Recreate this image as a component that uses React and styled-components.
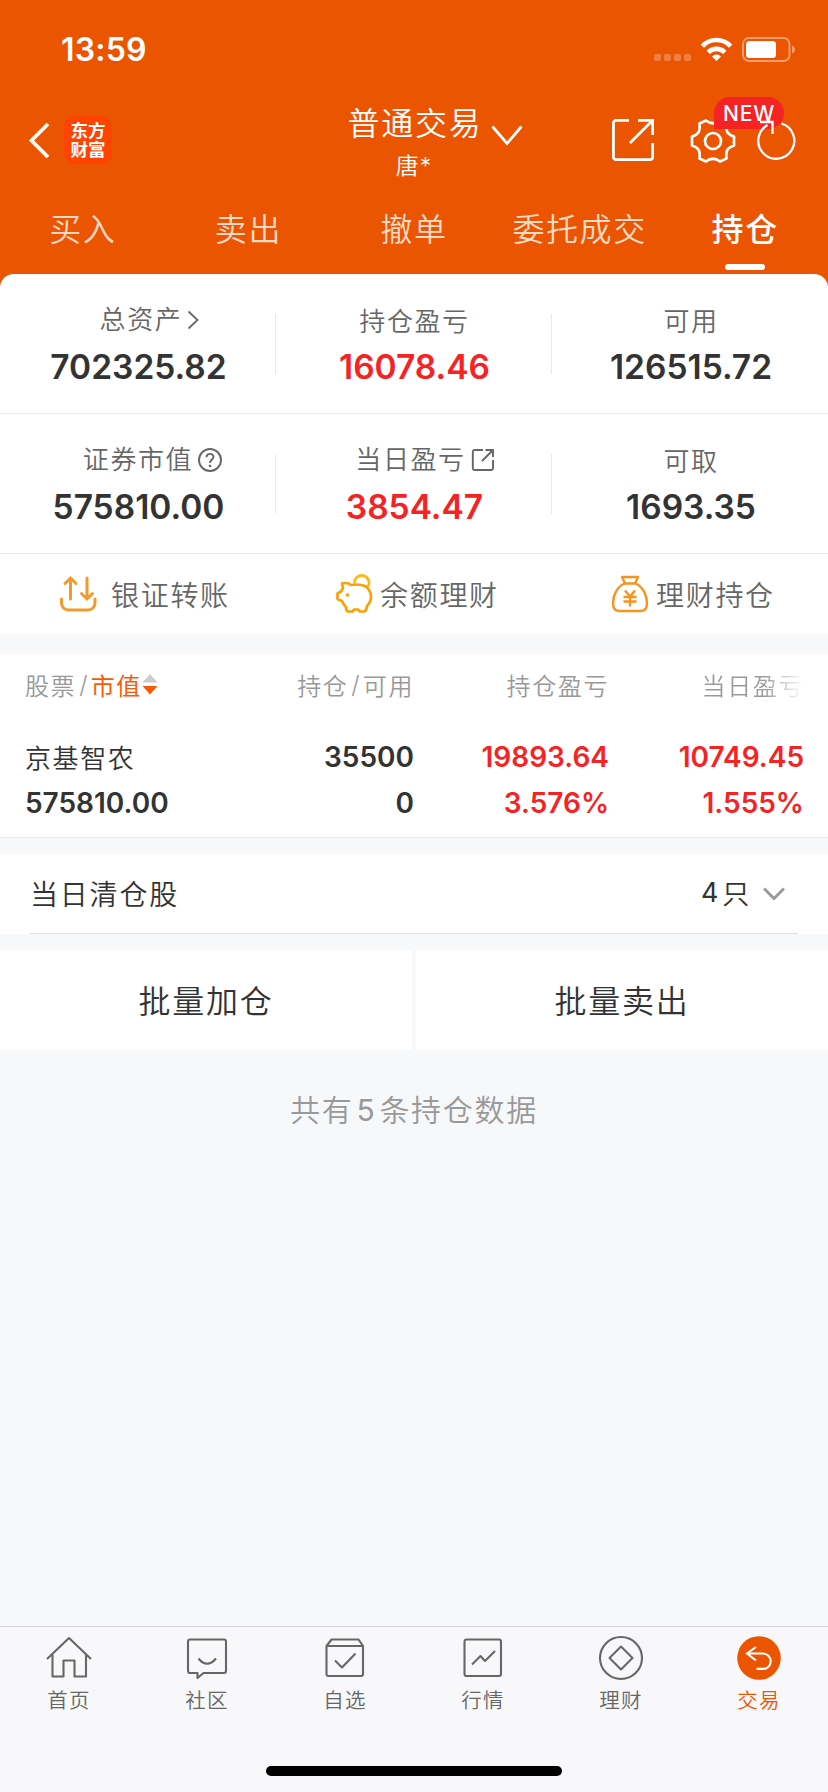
import React from 'react'
import styled, { createGlobalStyle, css } from 'styled-components'

const GlobalStyle = createGlobalStyle`
    * { box-sizing: border-box; }
    body {
        margin: 0;
        background: #f7f8fa;
        font-family: Inter, "Noto Sans CJK SC", sans-serif;
        font-weight: 350;
        color: #333;
    }
    svg { display: block; flex: none; }
`

const Page = styled.div`
    width: 828px;
    height: 1792px;
    display: flex;
    flex-direction: column;
    overflow: hidden;
`

const Header = styled.header`
    height: 286px;
    flex: none;
    background: #eb5502;
    color: #fff;
`

const StatusBar = styled.div`
    height: 96px;
    padding: 4px 33px 0 61px;
    display: flex;
    align-items: center;
    justify-content: space-between;
`

const Time = styled.span`
    font-size: 32px;
    line-height: 40px;
    font-weight: 600;
    letter-spacing: 0.2px;
`

const NavBar = styled.div`
    height: 94px;
    display: grid;
    grid-template-columns: 276px 276px 276px;
`

const NavLeft = styled.div`
    display: flex;
    align-items: center;
    padding: 0 0 6px 28px;
    gap: 14px;
`

const Logo = styled.div`
    width: 48px;
    height: 48px;
    border-radius: 10px;
    background: #ff4400;
    display: flex;
    flex-direction: column;
    align-items: center;
    justify-content: center;
    font-size: 17.5px;
    line-height: 19.5px;
    font-weight: 700;
`

const NavTitle = styled.div`
    display: grid;
    grid-template-columns: 1fr auto 1fr;
    align-content: start;
    padding-top: 8px;
`

const Title = styled.div`
    grid-column: 2;
    font-size: 32px;
    line-height: 40px;
    letter-spacing: 1.7px;
    margin-left: 2px;
`

const TitleArrow = styled.div`
    padding: 21px 0 0 9px;
`

const UserName = styled.div`
    grid-column: 2;
    text-align: center;
    font-size: 23px;
    line-height: 30px;
    margin-top: 4px;
    letter-spacing: 1px;
`

const NavRight = styled.div`
    display: flex;
    align-items: center;
    padding: 0 0 6px 60px;
`

const GearButton = styled.div`
    position: relative;
    margin: 1px 21px 0 36px;
`

const NewBadge = styled.span`
    position: absolute;
    left: 24px;
    top: -21px;
    width: 70px;
    height: 32px;
    border-radius: 16px 16px 16px 0;
    background: #f52323;
    font-size: 21px;
    line-height: 33px;
    font-weight: 500;
    letter-spacing: 0.8px;
    text-align: center;
`

// keeps the arrow drawn over the badge
const RefreshButton = styled.div`
    position: relative;
`

const Tabs = styled.nav`
    height: 84px;
    display: grid;
    grid-template-columns: repeat(5, 1fr);
`

const Tab = styled.div`
    display: flex;
    flex-direction: column;
    align-items: center;
    padding-top: 19px;
    font-size: 32px;
    line-height: 42px;
    letter-spacing: 1.6px;
    color: ${p => p.$active ? '#fff' : '#fcdac6'};
    font-weight: ${p => p.$active ? 500 : 350};

    ${p => p.$active && css`
        &::after {
            content: '';
            width: 40px;
            height: 6px;
            margin-top: 13px;
            border-radius: 3px;
            background: #fff;
        }
    `}
`

const Assets = styled.section`
    margin-top: -12px;
    height: 360px;
    flex: none;
    background: #fff;
    border-radius: 14px 14px 0 0;
`

const AssetRow = styled.div`
    height: 140px;
    display: grid;
    grid-template-columns: repeat(3, 1fr);
    align-items: center;
    border-bottom: 1px solid #e9e9e9;
`

const AssetCell = styled.div`
    height: 60px;
    display: flex;
    flex-direction: column;
    align-items: center;
    justify-content: center;
    padding-top: 2px;
    border-right: 1px solid #e9e9e9;

    &:last-child { border-right: 0; }
`

const AssetLabel = styled.div`
    display: flex;
    align-items: center;
    gap: 5px;
    padding-left: ${p => p.$shift || 2}px;
    margin-top: ${p => p.$shift ? -2 : 0}px;
    margin-bottom: ${p => p.$shift ? 2 : 0}px;
    font-size: 26px;
    line-height: 44px;
    letter-spacing: 1.6px;
    color: #666;
`

const AssetValue = styled.div`
    font-size: 33.5px;
    line-height: 46px;
    font-weight: 600;
    padding-left: 2px;
    color: ${p => p.$up ? '#f52323' : '#333'};
`

const Shortcuts = styled.div`
    height: 80px;
    display: grid;
    grid-template-columns: repeat(3, 1fr);
`

const Shortcut = styled.div`
    display: flex;
    align-items: center;
    padding: 0 0 1px 59px;
    gap: ${p => p.$gap}px;
    font-size: 28px;
    letter-spacing: 1.7px;
    color: #666;
`

const Holdings = styled.section`
    margin-top: 20px;
    height: 184px;
    flex: none;
    padding: 0 24px 0 25px;
    background: #fff;
    border-bottom: 1px solid #e9e9e9;
`

const HoldingsGrid = styled.div`
    display: grid;
    grid-template-columns: 188px 201px 195px 195px;
`

const HeadCell = styled.div`
    display: flex;
    align-items: center;
    justify-content: ${p => p.$first ? 'flex-start' : 'flex-end'};
    height: 64px;
    padding-bottom: 4px;
    font-size: 24px;
    letter-spacing: 1.6px;
    white-space: nowrap;
    color: #999;
`

const Slash = styled.span`
    margin: 0 1.5px 0 3px;
`

const SortKey = styled.span`
    color: #f85a06;
    font-weight: 400;
`

const Faded = styled.span`
    background: linear-gradient(to right, #999 60%, #fff 100%);
    background-clip: text;
    color: transparent;
`

const HoldCell = styled.div`
    margin-top: ${p => p.$top || 0}px;
    font-size: 28px;
    line-height: 45px;
    font-weight: 600;
    text-align: ${p => p.$first ? 'left' : 'right'};
    color: ${p => p.$up ? '#f52323' : '#333'};
`

const StockName = styled.div`
    margin-top: 18px;
    font-size: 26px;
    line-height: 45px;
    letter-spacing: 1.6px;
`

const Cleared = styled.section`
    margin-top: 16px;
    height: 80px;
    flex: none;
    padding: 0 30px;
    background: #fff;
`

const ClearedInner = styled.div`
    height: 80px;
    display: flex;
    align-items: center;
    padding-bottom: 2px;
    border-bottom: 1px solid #e0e0e0;
    font-size: 28px;
    letter-spacing: 1.8px;
`

const ClearedCount = styled.div`
    margin-left: auto;
    margin-right: 13px;
    display: flex;
    align-items: center;
    font-size: 27px;
    font-weight: 400;

    span {
        margin: 0 12px 0 2px;
        font-weight: 350;
    }

    svg { margin-top: 2px; }
`

const Batch = styled.section`
    margin-top: 16px;
    height: 100px;
    flex: none;
    display: grid;
    grid-template-columns: 1fr 1fr;
    column-gap: 4px;
`

const BatchButton = styled.div`
    display: flex;
    align-items: center;
    justify-content: center;
    padding-bottom: 2px;
    background: #fff;
    font-size: 32px;
    letter-spacing: 1.7px;
`

const Summary = styled.div`
    margin-top: 39px;
    text-align: center;
    font-size: 30px;
    line-height: 42px;
    letter-spacing: 1.7px;
    color: #999;

    span {
        margin: 0 3px;
        font-weight: 400;
    }
`

const TabBar = styled.footer`
    margin-top: auto;
    height: 166px;
    flex: none;
    display: flex;
    flex-direction: column;
    justify-content: space-between;
    align-items: center;
    background: #f8f8fb;
    border-top: 1px solid #d5d6d8;
`

const TabBarItems = styled.div`
    width: 100%;
    display: grid;
    grid-template-columns: repeat(6, 1fr);
`

const TabBarItem = styled.div`
    display: flex;
    flex-direction: column;
    align-items: center;
    padding-top: 8px;
    font-size: 20.5px;
    line-height: 30px;
    letter-spacing: 1.2px;
    color: ${p => p.$active ? '#eb5502' : '#666'};

    svg { margin-bottom: 5px; }
`

const HomeIndicator = styled.div`
    width: 296px;
    height: 10px;
    margin-bottom: 16px;
    border-radius: 5px;
    background: #000;
`

const StatusIcons = () => (
    <svg width="142" height="28" viewBox="652 36 142 28" fill="#fff">
        <g opacity="0.25">
            <rect x="653" y="54" width="7" height="7" rx="2" />
            <rect x="663" y="54" width="7" height="7" rx="2" />
            <rect x="673" y="54" width="7" height="7" rx="2" />
            <rect x="683" y="54" width="7" height="7" rx="2" />
        </g>
        <g fill="none" stroke="#fff" strokeWidth="4.6">
            <path d="M701.4 46.2a19.2 19.2 0 0 1 28.2 0" />
            <path d="M707.2 52.4a11.6 11.6 0 0 1 16.6 0" />
        </g>
        <path d="M715.5 61l-4.5-4.6a6.5 6.5 0 0 1 9 0z" />
        <rect x="742" y="38" width="46.5" height="23" rx="6" fill="none" stroke="#fff" strokeWidth="2" opacity="0.42" />
        <rect x="745" y="41" width="30" height="17" rx="3.5" />
        <path d="M791 45.5c4 1.5 4 6.5 0 8z" opacity="0.42" />
    </svg>
)

const BackIcon = () => (
    <svg width="22" height="36" viewBox="0 0 22 36" fill="none" stroke="#fff" strokeWidth="3.8">
        <path d="M20 2L3.5 18.5L20 35" />
    </svg>
)

const DownIcon = () => (
    <svg width="32" height="22" viewBox="0 0 32 22" fill="none" stroke="#fff" strokeWidth="2.7">
        <path d="M1.5 1.5L16 18.5L30.5 1.5" />
    </svg>
)

const ShareIcon = () => (
    <svg width="42" height="42" viewBox="0 0 42 42" fill="none" stroke="#fff" strokeWidth="2.8">
        <path d="M17 1.4H4a2.6 2.6 0 0 0-2.6 2.6V38a2.6 2.6 0 0 0 2.6 2.6H38a2.6 2.6 0 0 0 2.6-2.6V24" />
        <path d="M26 1.4H40.6V16M40 2L18 24" />
    </svg>
)

const GearIcon = () => (
    <svg width="46" height="46" viewBox="-23 -23 46 46" fill="none" stroke="#fff" strokeWidth="2.7" strokeLinejoin="round">
        <path d="M-7 -20.5Q0 -15 7 -20.5L13.5 -17.5C12.5 -9 15 -6.5 21 -4.5V4.5C15 6.5 12.5 9 13.5 17.5L7 20.5Q0 15 -7 20.5L-13.5 17.5C-12.5 9 -15 6.5 -21 4.5V-4.5C-15 -6.5 -12.5 -9 -13.5 -17.5Z" />
        <circle r="8" />
    </svg>
)

const RefreshIcon = () => (
    <svg width="40" height="42" viewBox="0 0 40 42" fill="none" stroke="#fff" strokeWidth="2.3">
        <path d="M24.5 4.5A18 18 0 1 1 10.5 6" />
        <path d="M3 3H15.5V15" />
    </svg>
)

const RightIcon = () => (
    <svg width="12" height="20" viewBox="0 0 12 20" fill="none" stroke="#666" strokeWidth="1.8">
        <path d="M1.5 1.5L10.5 10L1.5 18.5" />
    </svg>
)

const HelpIcon = () => (
    <svg width="24" height="24" viewBox="0 0 24 24" fill="none" stroke="#666" strokeWidth="1.9">
        <circle cx="12" cy="12" r="11" />
        <path d="M8.5 9.3C8.5 4.8 15.5 4.8 15.5 9C15.5 11.5 12 11.5 12 15" />
        <circle cx="12" cy="18" r="1.3" fill="#666" stroke="none" />
    </svg>
)

const DetailIcon = () => (
    <svg width="24" height="24" viewBox="0 0 24 24" fill="none" stroke="#666" strokeWidth="1.9">
        <path d="M12 2H3.5A1.8 1.8 0 0 0 1.8 3.7V20.3A1.8 1.8 0 0 0 3.5 22H20.3A1.8 1.8 0 0 0 22 20.3V12M14.5 2H22V9M22 2L11 13" />
    </svg>
)

const TransferIcon = () => (
    <svg width="40" height="38" viewBox="0 0 40 38" fill="none" stroke="#f39a2d" strokeWidth="3" strokeLinecap="round">
        <path d="M2.5 24V28a7 7 0 0 0 7 7H29a7 7 0 0 0 7-7V24" />
        <path d="M11.5 24V3M6 8.500L11.5 3L17 8.500M28 3V24M22.500 18.500L28 24L33.500 18.500" />
    </svg>
)

const PigIcon = () => (
    <svg width="38" height="40" viewBox="0 0 38 40" fill="none" stroke="#f9a106" strokeWidth="2.7" strokeLinejoin="round">
        <path d="M7 9.5Q13 8 16 11Q25 9.5 31 12.5Q36 17 36 23Q36 28 32 32Q31.5 37 29 37.5H25L23 35.5H19L17.5 37.5H13Q11 37 11 33Q8 30 7 27L2.5 25V19.5L6 17.5L8 14Z" />
        <path d="M19.5 9.5A7.3 7.3 0 1 1 33 12.5" stroke="#fcb713" />
        <circle cx="12.5" cy="21" r="1.8" fill="#f9a106" stroke="none" />
    </svg>
)

const BagIcon = () => (
    <svg width="38" height="38" viewBox="0 0 38 38" fill="none" stroke="#f8931d" strokeWidth="2.4" strokeLinejoin="round">
        <path d="M11 2H27L24 8.5H14Z" />
        <path d="M13.5 8.5C6 12 2 20 2 28Q2 36 8 36H30Q36 36 36 28C36 20 32 12 24.5 8.5" />
        <path d="M14 15.5L19 21.5L24 15.5M19 21.5V31.5M12.5 22H25.5M12.5 26.5H25.5" />
    </svg>
)

const SortIcon = () => (
    <svg width="16" height="22" viewBox="0 0 16 22">
        <path d="M8 1L15.5 9.5H0.5Z" fill="#ccc" />
        <path d="M8 21.5L15.5 13H0.5Z" fill="#f85a06" />
    </svg>
)

const ExpandIcon = () => (
    <svg width="22" height="14" viewBox="0 0 22 14" fill="none" stroke="#999" strokeWidth="2.9">
        <path d="M1 1.5L11 11.5L21 1.5" />
    </svg>
)

const BarIcon = ({ children }) => (
    <svg width="46" height="46" viewBox="0 0 46 46" fill="none" stroke="#666" strokeWidth="2.1" strokeLinejoin="round">
        {children}
    </svg>
)

const assets = [
    [
        { label: '总资产', value: '702325.82', icon: <RightIcon />, shift: 24 },
        { label: '持仓盈亏', value: '16078.46', up: true },
        { label: '可用', value: '126515.72' },
    ],
    [
        { label: '证券市值', value: '575810.00', icon: <HelpIcon />, shift: 30 },
        { label: '当日盈亏', value: '3854.47', up: true, icon: <DetailIcon />, shift: 23 },
        { label: '可取', value: '1693.35' },
    ],
]

const barItems = [
    {
        label: '首页',
        icon: <path d="M1 24L23 3L45 24M6.5 19.5V41.5H17.5V25.5H28.5V41.5H40V19.5" />,
    },
    {
        label: '社区',
        icon: <path d="M6 4.5H40a2 2 0 0 1 2 2V36a2 2 0 0 1-2 2H19.5L13.5 43V38H6a2 2 0 0 1-2-2V6.5a2 2 0 0 1 2-2ZM14.5 23.5Q23 34 32 23.5" />,
    },
    {
        label: '自选',
        icon: <path d="M4.5 11V39a2 2 0 0 0 2 2H39a2 2 0 0 0 2-2V11L36.5 4.5H9.5ZM4.5 11H41M13 25.5L20 32.5L33.5 18.5" />,
    },
    {
        label: '行情',
        icon: <path d="M6.5 4.5H39a2 2 0 0 1 2 2V39a2 2 0 0 1-2 2H6.5a2 2 0 0 1-2-2V6.5a2 2 0 0 1 2-2ZM12 29.5L20.5 21L25 26L35 16" />,
    },
    {
        label: '理财',
        icon: <><circle cx="23" cy="23" r="21" /><path d="M23 11.5L34.5 23L23 34.5L11.5 23Z" /></>,
    },
    {
        label: '交易',
        active: true,
        icon: <><circle cx="23" cy="23" r="21.8" fill="#eb5502" stroke="none" /><path d="M20 12L11 18.5L20 25.5M11 18.5H27a7.7 7.7 0 0 1 0 15.4H20.5" stroke="#fff" strokeLinejoin="miter" /></>,
    },
]

const App = () => (
    <Page>
        <GlobalStyle />
        <Header>
            <StatusBar>
                <Time>13:59</Time>
                <StatusIcons />
            </StatusBar>
            <NavBar>
                <NavLeft>
                    <BackIcon />
                    <Logo>
                        <span>东方</span>
                        <span>财富</span>
                    </Logo>
                </NavLeft>
                <NavTitle>
                    <Title>普通交易</Title>
                    <TitleArrow><DownIcon /></TitleArrow>
                    <UserName>唐*</UserName>
                </NavTitle>
                <NavRight>
                    <ShareIcon />
                    <GearButton>
                        <GearIcon />
                        <NewBadge>NEW</NewBadge>
                    </GearButton>
                    <RefreshButton><RefreshIcon /></RefreshButton>
                </NavRight>
            </NavBar>
            <Tabs>
                <Tab>买入</Tab>
                <Tab>卖出</Tab>
                <Tab>撤单</Tab>
                <Tab>委托成交</Tab>
                <Tab $active>持仓</Tab>
            </Tabs>
        </Header>

        <Assets>
            {assets.map((row, i) => (
                <AssetRow key={i}>
                    {row.map(item => (
                        <AssetCell key={item.label}>
                            <AssetLabel $shift={item.shift}>{item.label}{item.icon}</AssetLabel>
                            <AssetValue $up={item.up}>{item.value}</AssetValue>
                        </AssetCell>
                    ))}
                </AssetRow>
            ))}
            <Shortcuts>
                <Shortcut $gap={12}><TransferIcon />银证转账</Shortcut>
                <Shortcut $gap={7}><PigIcon />余额理财</Shortcut>
                <Shortcut $gap={7}><BagIcon />理财持仓</Shortcut>
            </Shortcuts>
        </Assets>

        <Holdings>
            <HoldingsGrid>
                <HeadCell $first>股票<Slash>/</Slash><SortKey>市值</SortKey><SortIcon /></HeadCell>
                <HeadCell>持仓<Slash>/</Slash>可用</HeadCell>
                <HeadCell>持仓盈亏</HeadCell>
                <HeadCell><Faded>当日盈亏</Faded></HeadCell>

                <StockName>京基智农</StockName>
                <HoldCell $top={17}>35500</HoldCell>
                <HoldCell $top={17} $up>19893.64</HoldCell>
                <HoldCell $top={17} $up>10749.45</HoldCell>

                <HoldCell $first>575810.00</HoldCell>
                <HoldCell>0</HoldCell>
                <HoldCell $up>3.576%</HoldCell>
                <HoldCell $up>1.555%</HoldCell>
            </HoldingsGrid>
        </Holdings>

        <Cleared>
            <ClearedInner>
                当日清仓股
                <ClearedCount>4<span>只</span><ExpandIcon /></ClearedCount>
            </ClearedInner>
        </Cleared>

        <Batch>
            <BatchButton>批量加仓</BatchButton>
            <BatchButton>批量卖出</BatchButton>
        </Batch>

        <Summary>共有<span>5</span>条持仓数据</Summary>

        <TabBar>
            <TabBarItems>
                {barItems.map(item => (
                    <TabBarItem key={item.label} $active={item.active}>
                        <BarIcon>{item.icon}</BarIcon>
                        {item.label}
                    </TabBarItem>
                ))}
            </TabBarItems>
            <HomeIndicator />
        </TabBar>
    </Page>
)

export default App
